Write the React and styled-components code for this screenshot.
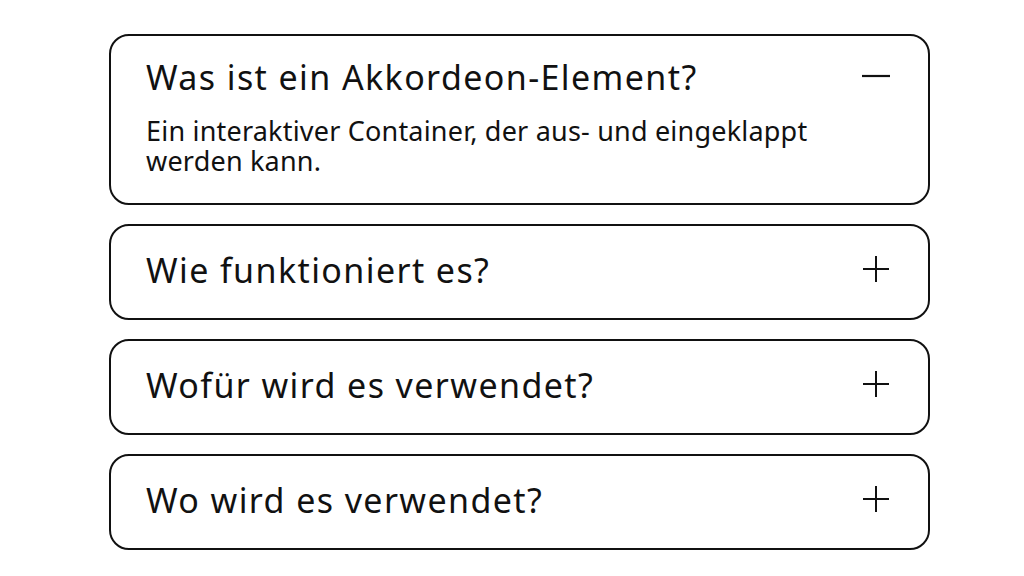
import React, { useState } from "react";
import styled, { createGlobalStyle } from "styled-components";

const GlobalStyle = createGlobalStyle`
  html, body {
    margin: 0;
    padding: 0;
    background: #ffffff;
  }
  body {
    font-family: "Noto Sans", "Open Sans", sans-serif;
    color: #111111;
  }
`;

const items = [
  {
    question: "Was ist ein Akkordeon-Element?",
    answer: "Ein interaktiver Container, der aus- und eingeklappt werden kann.",
  },
  { question: "Wie funktioniert es?", answer: "" },
  { question: "Wofür wird es verwendet?", answer: "" },
  { question: "Wo wird es verwendet?", answer: "" },
];

const Accordion = styled.div`
  width: 821px;
  margin: 34px 0 0 109px;
  display: flex;
  flex-direction: column;
  gap: 19px;
`;

const Card = styled.div`
  border: 2px solid #111111;
  border-radius: 20px;
  padding: ${(props) => (props.open ? "15px 38px 27px 35px" : "18px 38px 22px 35px")};
  background: #ffffff;
`;

const Header = styled.button`
  all: unset;
  display: flex;
  align-items: center;
  justify-content: space-between;
  width: 100%;
  cursor: pointer;
`;

const Question = styled.span`
  font-size: 34px;
  line-height: 52px;
  letter-spacing: 1.4px;
  font-weight: 400;
  color: #111111;
`;

const Toggle = styled.span`
  display: flex;
  width: 28px;
  height: 28px;
  margin-top: -2px;
  color: #111111;
`;

const Answer = styled.p`
  margin: 13px 0 0;
  max-width: 700px;
  font-size: 27px;
  line-height: 30px;
  letter-spacing: 0.2px;
  color: #111111;
`;

const PlusIcon = () => (
  <svg width="28" height="28" viewBox="0 0 28 28" fill="none">
    <path d="M14 1v26M1 14h26" stroke="currentColor" strokeWidth="2" />
  </svg>
);

const MinusIcon = () => (
  <svg width="28" height="28" viewBox="0 0 28 28" fill="none">
    <path d="M0 14h28" stroke="currentColor" strokeWidth="2.2" />
  </svg>
);

export default function App() {
  const [openIndex, setOpenIndex] = useState(0);

  return (
    <>
      <GlobalStyle />
      <Accordion>
        {items.map((item, index) => {
          const open = openIndex === index;
          return (
            <Card key={item.question} open={open}>
              <Header onClick={() => setOpenIndex(open ? -1 : index)}>
                <Question>{item.question}</Question>
                <Toggle>{open ? <MinusIcon /> : <PlusIcon />}</Toggle>
              </Header>
              {open && <Answer>{item.answer}</Answer>}
            </Card>
          );
        })}
      </Accordion>
    </>
  );
}
